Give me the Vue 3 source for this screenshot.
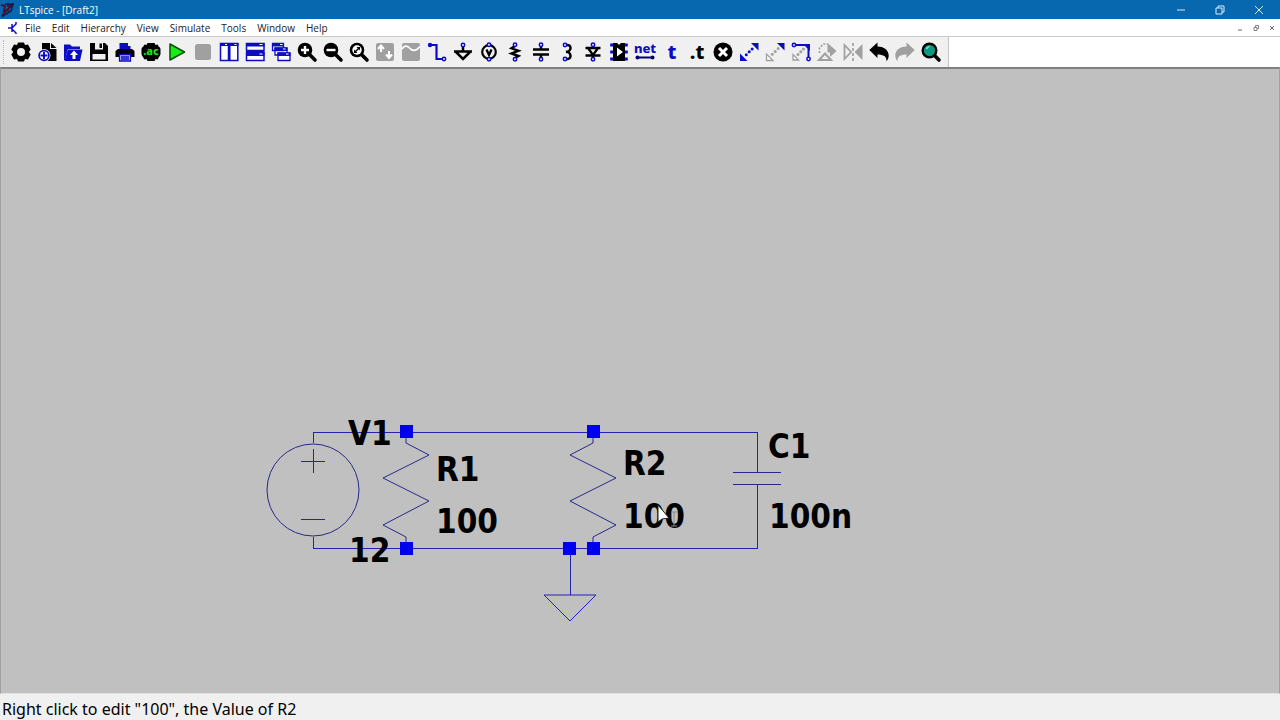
<script setup>
import { ref } from "vue";

const menus = ["File", "Edit", "Hierarchy", "View", "Simulate", "Tools", "Window", "Help"];

const B = "#0c0cc4";
const K = "#000";
const G = "#a0a0a0";

const pin = (x, y, c = B) =>
  `<circle cx="${x}" cy="${y}" r="1.700" fill="#f0f0f0" stroke="${c}" stroke-width="1.500"/>`;

const lens = (inner) =>
  `<path d="M12 12L18 18" stroke="${K}" stroke-width="3.600" stroke-linecap="round"/><circle cx="8" cy="8" r="7.300" fill="${K}"/>${inner}`;

const tools = [
  {
    label: "Settings",
    svg: `<path fill-rule="evenodd" fill="${K}" d="M7 .5h6l1 2.600 3-.5 2.700 5L17.800 10l1.900 2.400-2.700 5-3-.5-1 2.600H7l-1-2.600-3 .5L.3 12.400 2.200 10 .3 7.600 3 2.600l3 .5zM10 6a4 4 0 1 0 0 8 4 4 0 0 0 0-8z"/>`,
  },
  {
    label: "New schematic",
    svg: `<path fill="${K}" d="M5 1h8v6h6.500v12H5z"/><path fill="${K}" d="M14 1l5.500 5H14z"/><circle cx="7" cy="13.500" r="6.500" fill="#f0f0f0"/><circle cx="7" cy="13.500" r="4.900" fill="#fff" stroke="${B}" stroke-width="1.700"/><path d="M7 10v7M3.500 13.500h7" stroke="${B}" stroke-width="2"/>`,
  },
  {
    label: "Open",
    svg: `<path fill="${B}" d="M1 2.500h6l2 2h8v2.500H5L2 18H1z"/><path fill="${B}" d="M5 7.500h14.500L17 19H1.500z"/><path fill="#fff" d="M11 8.500l4 4.500h-2.500v4h-3v-4H7z"/>`,
  },
  {
    label: "Save",
    svg: `<path fill="${K}" d="M1 1h15l3 3v15H1z"/><path fill="#f0f0f0" d="M6 1h8v6.500H6zM3.500 12h13v5.500h-13z"/><path fill="${K}" d="M10.500 1.500h2.500v4.500h-2.500z"/>`,
  },
  {
    label: "Print",
    svg: `<path fill="${B}" d="M4.500 1h8.500v3h2.500v4h-11z"/><path fill="${K}" d="M3 7h14l2.500 2v6h-3.500v-3H4v3H.5V9z"/><path fill="#b8b8f4" stroke="${B}" stroke-width="1.300" d="M4.500 12.500h11v6.500h-11z"/><path stroke="${B}" stroke-width="1.300" d="M6 15h8M6 17h8"/>`,
  },
  {
    label: "Configure analysis",
    svg: `<path fill="${K}" d="M6.500 1h7l1 2 2-.5 2.500 4-1 1.500v4l1 1.500-2.500 4-2-.5-1 2h-7l-1-2-2 .5-2.500-4 1-1.500V8l-1-1.500 2.500-4 2 .5z"/><rect x=".5" y="5" width="19" height="9" rx="2" fill="${K}"/><text x="10" y="13" text-anchor="middle" font-size="11" font-weight="800" fill="#1be51b">.ac</text>`,
  },
  {
    label: "Run",
    svg: `<path d="M3 2v16L17.500 10z" fill="#14ee14" stroke="#064f06" stroke-width="1.500" stroke-linejoin="round"/>`,
  },
  { label: "Stop", svg: `<rect x="2" y="2" width="16" height="16" rx="2.500" fill="${G}"/>` },
  {
    label: "Tile vertically",
    svg: `<path fill="#fff" stroke="${B}" stroke-width="1.500" d="M1.500 1.500h8v17h-8zM10.800 1.500h8v17h-8z"/><path stroke="${B}" stroke-width="3" d="M1 2.500h18.500"/><path stroke="#fff" d="M6 2.500h2M15.500 2.500h2"/>`,
  },
  {
    label: "Tile horizontally",
    svg: `<path fill="#fff" stroke="${B}" stroke-width="1.500" d="M1.500 1.500h17.500v7H1.500zM1.500 10.800h17.500v7.700H1.500z"/><path fill="${B}" d="M1 1h18.500v3.500H1zM1 9h18.500v5H1z"/><path stroke="#fff" d="M14.500 2.500h3M14.500 12h3"/>`,
  },
  {
    label: "Cascade",
    svg: `<path fill="#fff" stroke="${B}" stroke-width="1.300" d="M1.500 1.500h11v7h-11zM4 6h12v7H4zM7 11h12v7.500H7z"/><path fill="${B}" d="M1 1h12v3.500H1zM3.500 5.500h13V9h-13zM6.500 10.500h13V14h-13z"/><path stroke="#fff" d="M9 2.500h2.500M12 7h2.500M15 12h2.500"/>`,
  },
  { label: "Zoom in", svg: lens(`<path d="M8 4v8M4 8h8" stroke="#fff" stroke-width="2.400"/>`) },
  { label: "Zoom out", svg: lens(`<path d="M3.500 8h9" stroke="#fff" stroke-width="2.400"/>`) },
  {
    label: "Zoom to fit",
    svg: lens(`<circle cx="8" cy="8" r="4.700" fill="#fff"/><path d="M6 10l4-4" stroke="${K}" stroke-width="1.500"/><path d="M7.500 5h3.500v3.500zM5 7.500V11h3.500z" fill="${K}"/>`),
  },
  {
    label: "Autorange",
    svg: `<rect x="1" y="1" width="18" height="18" rx="2" fill="${G}"/><path d="M6 10V4M3 7l3-3.500L9 7M14 9v7M11 12.500l3 3.500 3-3.500" fill="none" stroke="#fff" stroke-width="2"/>`,
  },
  {
    label: "Plot pane",
    svg: `<rect x="1" y="1" width="18" height="18" rx="2" fill="${G}"/><path d="M1 7C3 3.500 6 3 8.500 6s6 4 10.500-1.500" fill="none" stroke="#fff" stroke-width="1.700"/>`,
  },
  {
    label: "Wire",
    svg: `<path d="M3 3h6.500v14H15" fill="none" stroke="${B}" stroke-width="2.200"/><circle cx="3" cy="3" r="2.200" fill="${B}"/>${pin(17, 17)}`,
  },
  {
    label: "Ground",
    svg: `<path d="M10 4v5M1 9.500h18M3 10l7 7 7-7" fill="none" stroke="${K}" stroke-width="2.500"/>${pin(10, 3)}`,
  },
  {
    label: "Voltage source",
    svg: `<circle cx="10" cy="10" r="6.800" fill="none" stroke="${K}" stroke-width="2.200"/><path d="M7.500 7.500L10 13l2.500-5.500" fill="none" stroke="${K}" stroke-width="2.300"/>${pin(10, 2.7)}${pin(10, 17.3)}`,
  },
  {
    label: "Resistor",
    svg: `<path d="M10 4L6.500 6.300l7 2.500-7 2.700 7 2.500-3.500 2" fill="none" stroke="${K}" stroke-width="2.400"/>${pin(10, 2.7)}${pin(10, 17.3)}`,
  },
  {
    label: "Capacitor",
    svg: `<path d="M10 4v3M10 13v3M2 7.500h16M2 12.500h16" fill="none" stroke="${K}" stroke-width="2.500"/>${pin(10, 2.7)}${pin(10, 17.3)}`,
  },
  {
    label: "Inductor",
    svg: `<path d="M9 3c6-1 6 6.500 0 6.800c6 .4 6 8.200 0 7.200" fill="none" stroke="${K}" stroke-width="2.500"/>${pin(8, 3)}${pin(8, 17)}`,
  },
  {
    label: "Diode",
    svg: `<path d="M2.500 6h15M2.500 13.500h15M5 6l5 7 5-7M10 13v3" fill="none" stroke="${K}" stroke-width="2.300"/>${pin(10, 2.7)}${pin(10, 17.3)}`,
  },
  {
    label: "Component",
    svg: `<rect x="4" y="1" width="12" height="18" fill="${K}"/><path d="M8 5.500v9l6-4.500z" fill="#fff"/><path d="M8.500 1a1.500 1.500 0 0 0 3 0" fill="#fff"/><path d="M2.700 1.500v17M17.300 1.500v17" stroke="${B}" stroke-width="3" stroke-dasharray="3 4"/>`,
  },
  {
    label: "Net label",
    svg: `<text x="10" y="11" text-anchor="middle" font-size="13" font-weight="800" fill="${B}">net</text><path d="M2 15.500h16" stroke="#000070" stroke-width="2"/><circle cx="2.500" cy="15.500" r="2" fill="#000070"/><circle cx="17.500" cy="15.500" r="2" fill="#000070"/>`,
  },
  { label: "Text", svg: `<text x="11" y="17" text-anchor="middle" font-size="20" font-weight="800" fill="${B}">t</text>` },
  { label: "SPICE directive", svg: `<text x="10" y="17" text-anchor="middle" font-size="20" font-weight="800">.t</text>` },
  {
    label: "Delete",
    svg: `<circle cx="10" cy="10" r="9.500" fill="${K}"/><path d="M6 6l8 8M14 6l-8 8" stroke="#fff" stroke-width="3"/>`,
  },
  {
    label: "Duplicate",
    svg: `<path d="M12 1h7.500v7.500zM1 11.500V19h7.500z" fill="${B}"/><circle cx="7.300" cy="12.700" r="1.500" fill="${B}"/><circle cx="10.200" cy="9.800" r="1.500" fill="${B}"/><circle cx="13.100" cy="6.900" r="1.500" fill="${B}"/>`,
  },
  {
    label: "Move",
    svg: `<path d="M12 1h7.500v7.500z" fill="${B}"/><path d="M1.500 12v6.500h6.500z" fill="#fff" stroke="${G}" stroke-width="1.300"/><circle cx="7.300" cy="12.300" r="1.500" fill="${G}"/><circle cx="10.200" cy="9.500" r="1.500" fill="${G}"/><circle cx="13.100" cy="6.600" r="1.500" fill="${G}"/>`,
  },
  {
    label: "Drag",
    svg: `<path d="M3 3h14.500v14" fill="none" stroke="${B}" stroke-width="2"/><path d="M12 2h7v7z" fill="${B}"/><path d="M2 12.500v5.500h5.500z" fill="#fff" stroke="${G}" stroke-width="1.300"/><circle cx="7" cy="12.500" r="1.500" fill="${G}"/><circle cx="9.800" cy="9.800" r="1.500" fill="${G}"/><circle cx="12.500" cy="7" r="1.500" fill="${G}"/>${pin(3, 3)}${pin(17.5, 17)}`,
  },
  {
    label: "Rotate",
    svg: `<path d="M2.500 11V6l4-4H11" fill="none" stroke="${G}" stroke-width="1.700" stroke-dasharray="2 1.500"/><path d="M10.500 1l9 8-6.500 6V10.500h-2.500z" fill="${G}"/><path d="M8 11.500l6 6.500H2z" fill="#f0f0f0" stroke="${G}" stroke-width="2"/>`,
  },
  {
    label: "Mirror",
    svg: `<path d="M1.500 3v14l6.500-7z" fill="none" stroke="${G}" stroke-width="1.800"/><path d="M19.500 2v16L11.500 10z" fill="${G}"/><path d="M10 1v18" stroke="${G}" stroke-width="1.700" stroke-dasharray="3 2"/>`,
  },
  {
    label: "Undo",
    svg: `<path d="M.3 8L8.500 .5V4.500C16 4.500 19.700 9 19.700 13.500c0 2.500-.8 4-2.200 5.800.3-4.800-3-6.800-9-6.800v3.500z" fill="${K}"/>`,
  },
  {
    label: "Redo",
    svg: `<path d="M19.700 8L11.500 .5V4.500C4 4.500.3 9 .3 13.500c0 2.500.8 4 2.200 5.800-.3-4.800 3-6.800 9-6.800v3.500z" fill="${G}"/>`,
  },
  {
    label: "Search",
    svg: `<path d="M13 13l5 5" stroke="${K}" stroke-width="3.600" stroke-linecap="round"/><circle cx="8.500" cy="8.500" r="6.800" fill="#0d9a83" stroke="${K}" stroke-width="2.400"/><path d="M5.500 7a3.500 3.500 0 0 1 3-2.500" fill="none" stroke="#7fe8d8" stroke-width="1.500"/>`,
  },
];

const junctions = [
  [399, 356],
  [586, 356],
  [399, 473],
  [562, 473],
  [586, 473],
];

const labels = [
  { x: 347, y: 376, text: "V1" },
  { x: 348, y: 493, text: "12" },
  { x: 435, y: 412, text: "R1" },
  { x: 435, y: 464, text: "100" },
  { x: 622, y: 406, text: "R2" },
  { x: 622, y: 459, text: "100" },
  { x: 767, y: 389, text: "C1" },
  { x: 768, y: 459, text: "100n" },
];

const status = ref('Right click to edit "100", the Value of R2');
</script>

<template>
  <div class="app">
    <header class="titlebar">
      <svg class="logo" viewBox="0 0 14 16">
        <path d="M1 3l4 1-1 5 5-1M2 14l4-5 6-6-5 1" fill="none" stroke="#4a1030" stroke-width="2" />
        <path d="M5 2h8l-2 7-5 3-4 3" fill="none" stroke="#151a4a" stroke-width="1.5" />
      </svg>
      <h1>LTspice - [Draft2]</h1>
      <div class="window-buttons">
        <button type="button" aria-label="Minimize">
          <svg viewBox="0 0 10 10"><path d="M1 5h8" /></svg>
        </button>
        <button type="button" aria-label="Restore">
          <svg viewBox="0 0 10 10"><path d="M1 3h6v6H1zM3 3V1h6v6H7" /></svg>
        </button>
        <button type="button" aria-label="Close">
          <svg viewBox="0 0 10 10"><path d="M1 1l8 8M9 1L1 9" /></svg>
        </button>
      </div>
    </header>

    <nav class="menubar">
      <svg class="doc-icon" viewBox="0 0 12 12">
        <path d="M1 6h4M5 2v8M5 6l4-4V0M5 7l4 4v1" fill="none" stroke="#0c0cc4" stroke-width="1.5" />
      </svg>
      <button v-for="menu in menus" :key="menu" type="button" class="menu">{{ menu }}</button>
      <div class="child-buttons">
        <button type="button" aria-label="Minimize document">
          <svg viewBox="0 0 6 6"><path d="M1 5h4" /></svg>
        </button>
        <button type="button" aria-label="Restore document">
          <svg viewBox="0 0 6 6"><path class="thin" d="M1 2.500h3v3H1zM2.500 2V.5h3v3H4" /></svg>
        </button>
        <button type="button" aria-label="Close document">
          <svg viewBox="0 0 6 6"><path d="M1 1l4 4M5 1L1 5" /></svg>
        </button>
      </div>
    </nav>

    <div class="toolrow">
      <div class="toolbar" role="toolbar" aria-label="Schematic tools">
        <button v-for="tool in tools" :key="tool.label" type="button" :aria-label="tool.label">
          <svg viewBox="0 0 20 20" v-html="tool.svg"></svg>
        </button>
      </div>
    </div>

    <main class="canvas">
      <svg class="schematic">
        <g class="wires">
          <path d="M312 374V363H756V403" />
          <path d="M312 468V479H756V415" />
          <path d="M569 479V526" />
        </g>
        <g class="symbols">
          <!-- V1 -->
          <circle cx="312" cy="421" r="46" />
          <path class="crisp" d="M300 392H324M312 380V404M300 450H324" />
          <!-- R1 -->
          <path d="M405 363V374L428 386L382 409L428 432L382 456L405 468V479" />
          <!-- R2 -->
          <path d="M592 363V374L569 386L615 409L569 432L615 456L592 468V479" />
          <!-- C1 -->
          <path class="crisp" d="M732 403H780M732 415H780" />
        </g>
        <path class="ground" d="M543 526H595L569 552Z" />
        <rect v-for="([x, y], i) in junctions" :key="i" class="junction" :x="x" :y="y" width="13" height="13" />
        <text v-for="(label, i) in labels" :key="i" class="label" :x="label.x" :y="label.y">{{ label.text }}</text>
        <g class="cursor">
          <path d="M657 436V453L661 450L668 449Z" />
          <path class="beam" d="M670 443H676M670 457H676M673 443V457" />
        </g>
      </svg>
    </main>

    <footer class="statusbar">{{ status }}</footer>
  </div>
</template>

<style>
body {
  margin: 0;
}
</style>

<style scoped>
.app {
  display: flex;
  flex-direction: column;
  height: 100vh;
  background: #f0f0f0;
  font-family: "Noto Sans", "Open Sans", sans-serif;
  color: #000;
}
button {
  display: flex;
  align-items: center;
  justify-content: center;
  margin: 0;
  padding: 0;
  border: 0;
  background: none;
  color: inherit;
  font: inherit;
}

.titlebar {
  display: flex;
  align-items: center;
  height: 19px;
  background: #0768b0;
  color: #fff;
}
.logo {
  width: 14px;
  height: 16px;
}
h1 {
  margin: 0 0 0 5px;
  font-family: "Open Sans", sans-serif;
  font-size: 10px;
  font-weight: 400;
}
.window-buttons {
  display: flex;
  margin-left: auto;
}
.window-buttons button {
  width: 39px;
  height: 19px;
}
.window-buttons button:last-child {
  margin-right: 2px;
}
.window-buttons svg {
  width: 10px;
  height: 10px;
  fill: none;
  stroke: #d8ecfa;
}

.menubar {
  display: flex;
  align-items: center;
  gap: 11px;
  height: 17px;
  padding-left: 7px;
  background: #fff;
  border-bottom: 1px solid #c8c8c8;
  font-family: "Open Sans", sans-serif;
  font-size: 10px;
  color: #222;
}
.doc-icon {
  width: 12px;
  height: 12px;
  margin-right: -5px;
}
.child-buttons {
  display: flex;
  gap: 10px;
  margin-left: auto;
  padding-right: 5px;
}
.child-buttons svg {
  width: 6px;
  height: 6px;
  fill: none;
  stroke: #666;
}
.child-buttons .thin {
  stroke-width: 0.8;
}

.toolrow {
  display: flex;
  height: 30px;
  background: #fff;
}
.toolbar {
  display: flex;
  align-items: center;
  padding: 0 4px 0 3px;
  background: #f0f0f0;
  border-right: 1px solid #c4c4c4;
}
.toolbar::before {
  content: "";
  height: 24px;
  margin-right: 4px;
  border-left: 1px dotted #b8b8b8;
}
.toolbar button {
  width: 26px;
  height: 26px;
}
.toolbar svg {
  width: 20px;
  height: 20px;
  overflow: visible;
}

.canvas {
  flex: 1;
  min-height: 0;
  background: #c0c0c0;
  border: 1px solid #a0a0a0;
  border-top: 2px solid #808080;
  border-bottom-color: #e0e0e0;
}
.schematic {
  display: block;
  width: 100%;
  height: 100%;
}
.wires path,
.symbols path,
.symbols circle,
.ground {
  fill: none;
  stroke: #2323b4;
  stroke-width: 1px;
}
.wires path,
.crisp {
  shape-rendering: crispEdges;
}
.symbols path,
.symbols circle {
  stroke: #28288c;
}
.junction {
  fill: #0000f0;
}
.label {
  font-family: "DejaVu Sans Condensed", "DejaVu Sans", sans-serif;
  font-size: 33px;
  font-weight: 700;
}
.cursor path {
  fill: #fff;
  stroke: #222;
}
.cursor .beam {
  fill: none;
  stroke: #888;
}

.statusbar {
  height: 26px;
  padding-left: 2px;
  line-height: 30px;
  font-size: 16px;
}
</style>
